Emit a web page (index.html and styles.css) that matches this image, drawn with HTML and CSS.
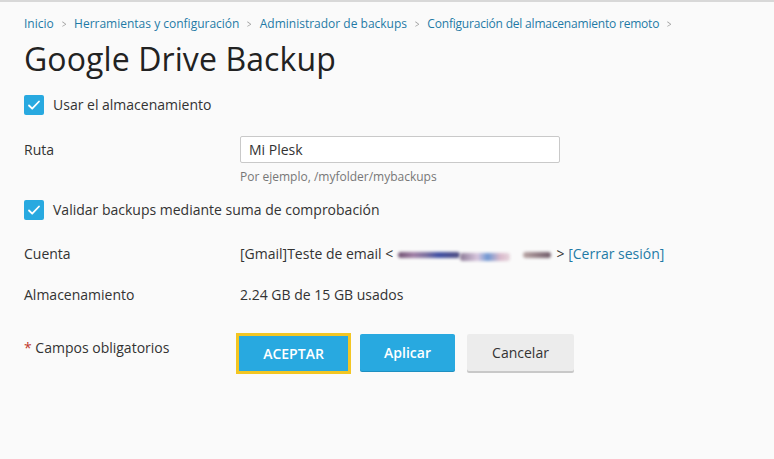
FILE: index.html
```html
<!DOCTYPE html>
<html lang="es">
<head>
<meta charset="utf-8">
<title>Google Drive Backup</title>
<link rel="stylesheet" href="styles.css">
</head>
<body>
<div class="page">
  <nav class="crumbs">
    <a>Inicio</a><span class="sep">&gt;</span>
    <a>Herramientas y configuración</a><span class="sep">&gt;</span>
    <a>Administrador de backups</a><span class="sep">&gt;</span>
    <a>Configuración del almacenamiento remoto</a><span class="sep">&gt;</span>
  </nav>
  <h1 class="title">Google Drive Backup</h1>

  <div class="check-row first">
    <span class="box"><svg viewBox="0 0 20 20" width="20" height="20"><path d="M5 10.5l3.2 3.2L15 6.5" fill="none" stroke="#fff" stroke-width="1.8" stroke-linecap="round" stroke-linejoin="round"/></svg></span>
    <span>Usar el almacenamiento</span>
  </div>

  <div class="row path-row">
    <div class="label">Ruta</div>
    <div class="field">
      <div class="input">Mi Plesk</div>
      <div class="hint">Por ejemplo, /myfolder/mybackups</div>
    </div>
  </div>

  <div class="check-row second">
    <span class="box"><svg viewBox="0 0 20 20" width="20" height="20"><path d="M5 10.5l3.2 3.2L15 6.5" fill="none" stroke="#fff" stroke-width="1.8" stroke-linecap="round" stroke-linejoin="round"/></svg></span>
    <span>Validar backups mediante suma de comprobación</span>
  </div>

  <div class="row account-row">
    <div class="label">Cuenta</div>
    <div class="value">[Gmail]Teste de email &lt; <span class="blur"><span class="b1"></span><span class="b2"></span><span class="b3"></span></span> &gt; <a class="link">[Cerrar sesión]</a></div>
  </div>

  <div class="row storage-row">
    <div class="label">Almacenamiento</div>
    <div class="value">2.24 GB de 15 GB usados</div>
  </div>

  <div class="row actions">
    <div class="label req"><span class="star">*</span> Campos obligatorios</div>
    <div class="buttons">
      <button class="btn primary focused">ACEPTAR</button>
      <button class="btn primary">Aplicar</button>
      <button class="btn plain">Cancelar</button>
    </div>
  </div>
</div>
</body>
</html>
```

FILE: styles.css
```css
html, body {
  margin: 0;
  padding: 0;
  background: #fafafa;
}
body {
  font-family: "Open Sans", "Liberation Sans", sans-serif;
  color: #333;
  font-size: 14px;
  border-top: 2px solid #d8d8d8;
  height: 457px;
}
.page {
  padding: 13px 24px 0 24px;
}
.crumbs {
  font-size: 12px;
  line-height: 18px;
  display: flex;
  align-items: center;
  white-space: nowrap;
}
.crumbs a {
  color: #1f7aa6;
}
.crumbs a:last-of-type {
  letter-spacing: -0.2px;
}
.crumbs .sep {
  color: #9a9a9a;
  margin: 0 7px 0 7px;
  font-size: 11px;
  transform: scaleX(0.7);
  display: inline-block;
}
.title {
  margin: 6px 0 0 0;
  font-weight: 400;
  font-size: 32px;
  line-height: 40px;
  color: #222;
  letter-spacing: 0.1px;
}
.check-row {
  display: flex;
  align-items: center;
  gap: 9px;
  line-height: 20px;
  color: #333;
}
.check-row.first { margin-top: 16px; }
.check-row.second { margin-top: 15px; }
.box {
  width: 20px;
  height: 20px;
  border-radius: 2px;
  background: #28a9e0;
  display: inline-flex;
}
.row {
  display: flex;
  align-items: flex-start;
}
.label {
  width: 216px;
  flex: none;
  line-height: 20px;
}
.path-row { margin-top: 21px; }
.path-row .label { padding-top: 4px; }
.input {
  width: 310px;
  height: 25px;
  border: 1px solid #c9c9c9;
  border-radius: 2px;
  background: #fff;
  padding: 0 0 0 8px;
  line-height: 25px;
  color: #333;
}
.hint {
  font-size: 12px;
  color: #777;
  margin-top: 5px;
  line-height: 17px;
}
.account-row { margin-top: 24px; }
.storage-row { margin-top: 21px; }
.value { line-height: 20px; white-space: nowrap; }
.link { color: #1f7aa6; }
.blur {
  display: inline-block;
  position: relative;
  width: 156px;
  height: 10px;
  vertical-align: -1px;
}
.blur span {
  position: absolute;
  top: 2px;
  height: 6px;
  filter: blur(1.4px);
  border-radius: 3px;
}
.blur .b1 {
  left: 1px; width: 62px;
  background: linear-gradient(90deg, #6e5070, #a07fa5 25%, #7b6f9e 45%, #3f4fa3 65%, #4f4d80);
}
.blur .b2 {
  left: 63px; width: 50px; top: 3px; height: 8px;
  background: linear-gradient(90deg, #8b7a96, #d8c6dd 35%, #6e97d3 55%, #d9b9cb 80%, #e6d4dc);
}
.blur .b3 {
  left: 126px; width: 28px;
  background: linear-gradient(90deg, #b8a4a4, #6f5a68);
}
.actions { margin-top: 29px; }
.actions .label { padding-top: 4px; }
.star { color: #c0392b; }
.buttons {
  display: flex;
  align-items: flex-start;
  margin-left: -4px;
}
.btn {
  font-family: "Open Sans", "Liberation Sans", sans-serif;
  font-size: 14px;
  font-weight: 600;
  border: none;
  border-radius: 2px;
  height: 37px;
  cursor: pointer;
}
.btn.primary {
  background: #28a9e0;
  color: #fff;
  box-shadow: 0 1px 0 #1e8fc0;
}
.btn.focused {
  width: 115px;
  height: 41px;
  border: 3px solid #f3c623;
  border-radius: 0;
  margin-top: -1px;
  box-shadow: none;
}
.buttons .btn + .btn { margin-left: 9px; }
.buttons .btn:nth-child(2) { width: 95px; }
.btn.plain {
  background: #ececec;
  color: #333;
  font-weight: 400;
  width: 107px;
  margin-left: 12px !important;
  box-shadow: 0 2px 0 #c8c8c8;
}
```
